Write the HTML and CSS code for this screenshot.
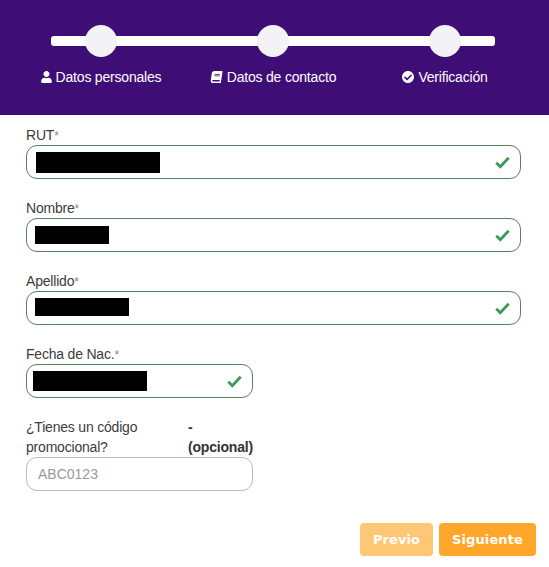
FILE: index.html
```html
<!DOCTYPE html>
<html lang="es">
<head>
<meta charset="utf-8">
<title>Registro</title>
<link rel="stylesheet" href="styles.css">
</head>
<body>
<header class="steps">
  <div class="track">
    <div class="step">
      <span class="dot"></span>
      <span class="step-label"><svg class="ico ico-user" viewBox="0 0 448 512"><path d="M224 256c70.700 0 128-57.300 128-128S294.700 0 224 0 96 57.300 96 128s57.300 128 128 128zm89.600 32h-16.700c-22.200 10.200-46.900 16-72.900 16s-50.600-5.800-72.900-16h-16.700C60.200 288 0 348.200 0 422.400V464c0 26.500 21.500 48 48 48h352c26.500 0 48-21.500 48-48v-41.600c0-74.200-60.200-134.400-134.400-134.400z"/></svg>Datos personales</span>
    </div>
    <div class="step">
      <span class="dot"></span>
      <span class="step-label"><svg class="ico ico-book" viewBox="-40 0 528 512"><path transform="skewX(-8) translate(36 0)" d="M448 360V24c0-13.300-10.700-24-24-24H96C43 0 0 43 0 96v320c0 53 43 96 96 96h328c13.300 0 24-10.700 24-24v-16c0-7.500-3.500-14.300-8.900-18.700-4.200-15.400-4.200-59.300 0-74.700 5.400-4.300 8.900-11.100 8.900-18.600zM128 134c0-3.300 2.700-6 6-6h212c3.300 0 6 2.700 6 6v20c0 3.300-2.700 6-6 6H134c-3.300 0-6-2.700-6-6v-20zm0 64c0-3.300 2.700-6 6-6h212c3.300 0 6 2.700 6 6v20c0 3.300-2.700 6-6 6H134c-3.300 0-6-2.700-6-6v-20zm253.400 250H96c-17.700 0-32-14.300-32-32 0-17.600 14.400-32 32-32h285.400c-1.900 17.100-1.900 46.900 0 64z"/></svg>Datos de contacto</span>
    </div>
    <div class="step">
      <span class="dot"></span>
      <span class="step-label"><svg class="ico ico-check" viewBox="8 8 496 496"><path d="M504 256c0 136.967-111.033 248-248 248S8 392.967 8 256 119.033 8 256 8s248 111.033 248 248zM227.314 387.314l184-184c6.248-6.248 6.248-16.379 0-22.627l-22.627-22.627c-6.248-6.249-16.379-6.250-22.628 0L216 308.118l-70.059-70.059c-6.248-6.248-16.379-6.248-22.628 0l-22.627 22.627c-6.248 6.248-6.248 16.379 0 22.627l104 104c6.249 6.249 16.379 6.249 22.628.001z"/></svg>Verificación</span>
    </div>
  </div>
</header>

<form class="form">
  <div class="field">
    <label class="label">RUT<span class="req">*</span></label>
    <div class="box valid">
      <span class="redact r-rut"></span>
      <svg class="tick" viewBox="0 0 15 13"><path d="M1.300 6.800 5.300 10.800 13.700 1.800"/></svg>
    </div>
  </div>
  <div class="field">
    <label class="label">Nombre<span class="req">*</span></label>
    <div class="box valid">
      <span class="redact r-nombre"></span>
      <svg class="tick" viewBox="0 0 15 13"><path d="M1.300 6.800 5.300 10.800 13.700 1.800"/></svg>
    </div>
  </div>
  <div class="field">
    <label class="label">Apellido<span class="req">*</span></label>
    <div class="box valid">
      <span class="redact r-apellido"></span>
      <svg class="tick" viewBox="0 0 15 13"><path d="M1.300 6.800 5.300 10.800 13.700 1.800"/></svg>
    </div>
  </div>
  <div class="field half">
    <label class="label">Fecha de Nac.<span class="req">*</span></label>
    <div class="box valid">
      <span class="redact r-fecha"></span>
      <svg class="tick" viewBox="0 0 15 13"><path d="M1.300 6.800 5.300 10.800 13.700 1.800"/></svg>
    </div>
  </div>
  <div class="field half promo">
    <div class="promo-label">
      <label class="label promo-q">¿Tienes un código promocional?</label>
      <span class="promo-opt">- (opcional)</span>
    </div>
    <input class="box text-input" type="text" placeholder="ABC0123">
  </div>
  <div class="actions">
    <button class="btn btn-prev" type="button">Previo</button>
    <button class="btn" type="button">Siguiente</button>
  </div>
</form>
</body>
</html>
```

FILE: styles.css
```css
* { box-sizing: border-box; }

html, body {
  margin: 0;
  padding: 0;
  background: #fff;
}

body {
  font-family: "Liberation Sans", Arial, sans-serif;
  font-size: 14px;
  line-height: 20px;
  letter-spacing: -0.2px;
  color: #333;
}

.steps {
  height: 115px;
  background: #3e0d76;
  padding: 25px 15px 0;
}

.track {
  position: relative;
  display: grid;
  grid-template-columns: repeat(3, 172px);
}

.track::before {
  content: "";
  position: absolute;
  left: 36px;
  top: 11px;
  width: 444px;
  height: 10px;
  border-radius: 3px;
  background: #fff;
}

.step {
  position: relative;
  display: flex;
  flex-direction: column;
  align-items: center;
}

.dot {
  width: 32px;
  height: 32px;
  border-radius: 50%;
  background: #f3f3f5;
}

.step-label {
  display: flex;
  align-items: center;
  margin-top: 10px;
  color: #fff;
  white-space: nowrap;
}

.ico {
  fill: #fff;
  height: 12px;
  margin-right: 4px;
}

.ico-user { width: 11px; }
.ico-book { width: 13px; }
.ico-check { width: 12px; }

.form {
  padding: 10px 28px 0 26px;
}

.field {
  margin-bottom: 19px;
}

.half {
  width: 227px;
}

.label {
  display: block;
  color: #3c3c3c;
}

.req {
  color: #888;
  font-size: 12px;
  line-height: 0;
}

.box {
  display: flex;
  align-items: center;
  justify-content: space-between;
  width: 100%;
  height: 34px;
  border: 1px solid #bbb;
  border-radius: 11px;
  background: #fff;
}

.valid {
  border-color: #5a7f5e;
  padding-right: 10px;
}

.redact {
  display: block;
  background: #000;
}

.r-rut { width: 124px; height: 21px; margin-left: 9px; }
.r-nombre { width: 74px; height: 18px; margin-left: 8px; }
.r-apellido { width: 94px; height: 18px; margin: 0 0 2px 8px; }
.r-fecha { width: 114px; height: 20px; margin-left: 6px; }

.tick {
  width: 15px;
  height: 13px;
  fill: none;
  stroke: #3d9a57;
  stroke-width: 2.800;
}

.promo {
  margin-bottom: 0;
}

.promo-label {
  display: flex;
}

.promo-q {
  width: 162px;
}

.promo-opt {
  width: 65px;
  font-weight: 700;
  color: #333;
}

.text-input {
  display: block;
  padding: 0 11px;
  font: 14px "Liberation Sans", Arial, sans-serif;
  color: #333;
  outline: none;
}

.text-input::placeholder {
  color: #999;
  opacity: 1;
}

.actions {
  display: flex;
  justify-content: flex-end;
  gap: 6px;
  margin: 32px -15px 0 0;
}

.btn {
  height: 33px;
  width: 97px;
  padding: 0;
  border: 0;
  border-radius: 4px;
  background: #ffa62b;
  color: #fff;
  font: 700 13px "DejaVu Sans", Verdana, sans-serif;
  letter-spacing: 0.1px;
}

.btn-prev {
  width: 73px;
  background: #ffc676;
}
```
